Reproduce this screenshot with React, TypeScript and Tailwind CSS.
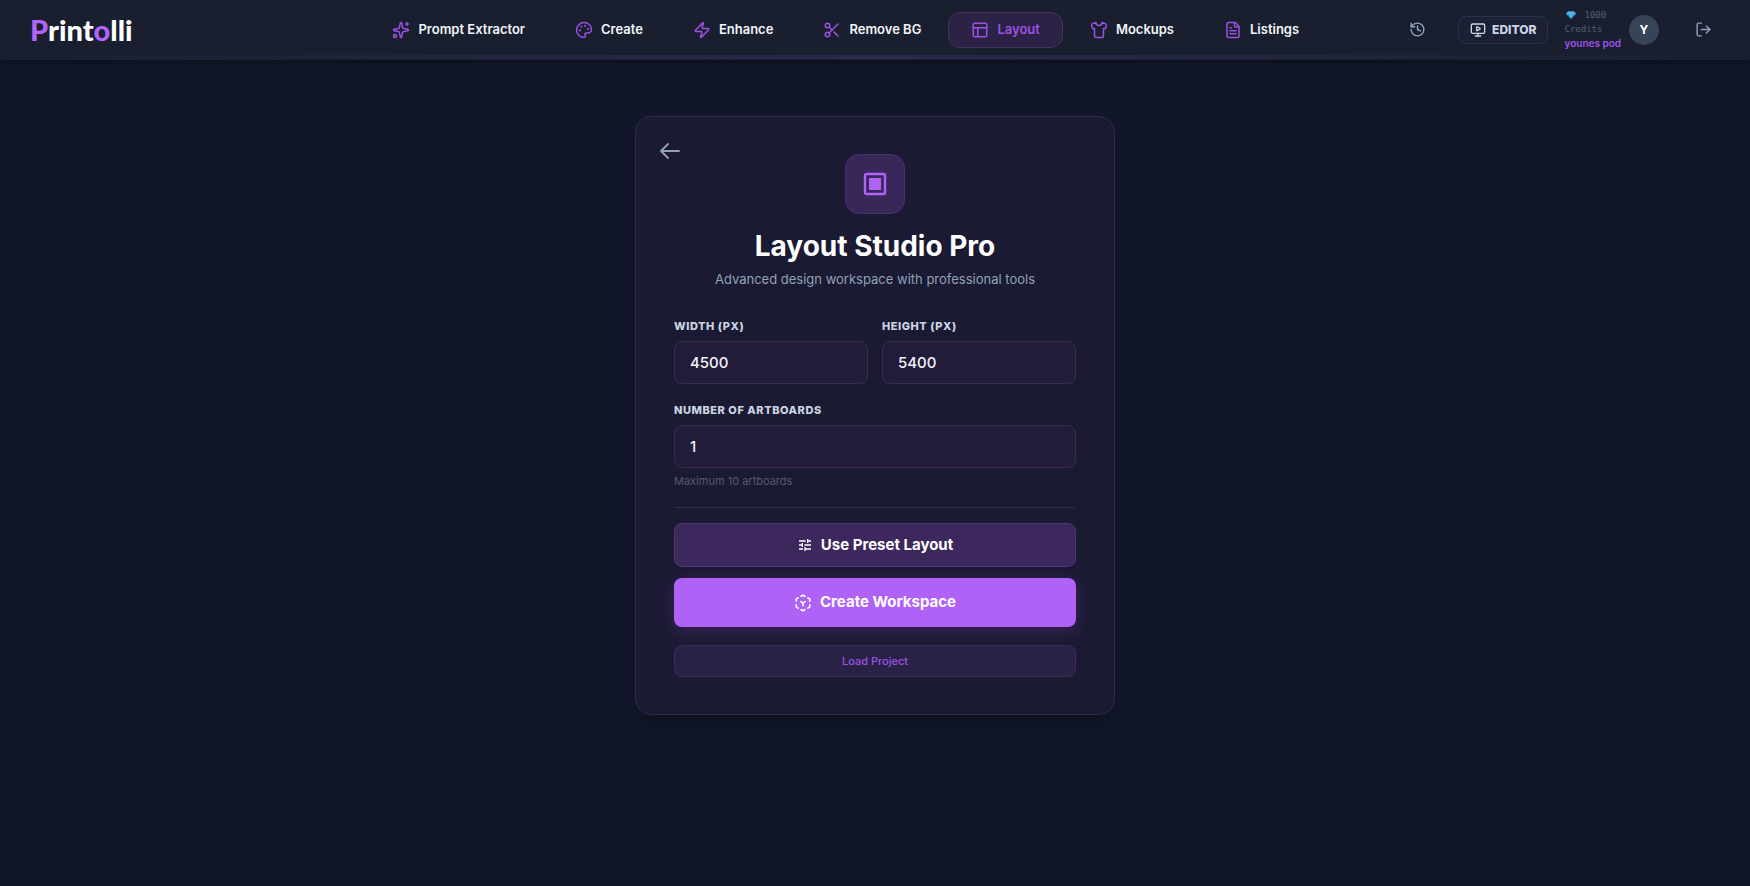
import React, { useState } from 'react';
import {
  FileText,
  History,
  LogOut,
  MonitorPlay,
  Palette,
  PanelsTopLeft,
  Scissors,
  Shirt,
  Sparkles,
  Zap,
} from 'lucide-react';
import { MdTune } from 'react-icons/md';

const navItems = [
  { id: 'prompt', label: 'Prompt Extractor', icon: Sparkles },
  { id: 'create', label: 'Create', icon: Palette },
  { id: 'enhance', label: 'Enhance', icon: Zap },
  { id: 'remove-bg', label: 'Remove BG', icon: Scissors },
  { id: 'layout', label: 'Layout', icon: PanelsTopLeft },
  { id: 'mockups', label: 'Mockups', icon: Shirt },
  { id: 'listings', label: 'Listings', icon: FileText },
];

const GemIcon: React.FC = () => (
  <svg viewBox="0 0 20 16" className="w-[10px] h-2" aria-hidden="true">
    <path d="M4 1h12l4 5-10 10L0 6z" fill="#2f8fd0" />
    <path d="M4 1h12l4 5H0z" fill="#57b4e4" />
    <path d="M6 6h8l-4 10z" fill="#4db6ee" />
  </svg>
);

// Hexagon of broken strokes with a three-way joint in the middle
const CubeIcon: React.FC = () => (
  <svg
    viewBox="0 0 24 24"
    className="w-[18px] h-[18px]"
    fill="none"
    stroke="currentColor"
    strokeWidth="2.2"
    strokeLinecap="round"
    strokeLinejoin="round"
    aria-hidden="true"
  >
    <path d="M9.5 3L12 1.600l2.500 1.400M18.500 5.200L21 6.600v3M21 14.400v3l-2.500 1.400M14.500 21L12 22.400 9.500 21M5.500 18.800L3 17.400v-3M3 9.600v-3l2.500-1.400" />
    <path d="M9 10.200l3 1.800 3-1.800M12 12v3.400" />
  </svg>
);

const Header: React.FC = () => {
  const [active, setActive] = useState('layout');

  return (
    <header className="relative flex items-center h-[60px] px-[30px] bg-[#191f2f] border-b border-[#1d1f33] shadow-md shadow-black/20">
      <a href="#" className="font-['Lato',sans-serif] text-[29px] leading-8 font-black text-white">
        <span className="text-[#b263f8]">P</span>rint<span className="text-[#b263f8]">o</span>lli
      </a>

      <div className="grow-3" />

      <nav className="flex items-center gap-1">
        {navItems.map(({ id, label, icon: Icon }) => (
          <button
            key={id}
            onClick={() => setActive(id)}
            className={`flex items-center gap-2 h-9 px-[22px] rounded-xl border text-[13px] font-semibold whitespace-nowrap transition-colors ${
              active === id ? 'bg-[#2b2245] border-[#43315e] text-[#9c50e4]' : 'border-transparent text-slate-100'
            }`}
          >
            <Icon className="w-[18px] h-[18px] text-[#9c50e4]" strokeWidth={2} />
            {label}
          </button>
        ))}
      </nav>

      <div className="grow" />

      <div className="flex items-center">
        <button aria-label="History" className="p-2 mr-6 text-slate-400">
          <History className="w-[17px] h-[17px]" />
        </button>
        <button className="flex items-center gap-1.5 h-7 px-[11px] mr-4 rounded-lg border border-[#2f3049] bg-[#1b2034] text-xs font-extrabold text-slate-300">
          <MonitorPlay className="w-4 h-4" />
          EDITOR
        </button>
        <div className="flex flex-col pb-0.5 mr-2 leading-[14px]">
          <span className="flex items-center gap-2 pl-0.5 font-['DejaVu_Sans_Mono',monospace] text-[9px] text-[#556074]">
            <GemIcon />
            1000
          </span>
          <span className="font-['DejaVu_Sans_Mono',monospace] text-[9px] text-[#556074]">Credits</span>
          <span className="text-[10px] font-semibold text-[#a052ea]">younes pod</span>
        </div>
        <div className="flex items-center justify-center w-[30px] h-[30px] rounded-full bg-[#374357] text-xs font-bold text-white">
          Y
        </div>
        <button aria-label="Log out" className="p-2 ml-7 text-slate-400">
          <LogOut className="w-[17px] h-[17px]" />
        </button>
      </div>

      <div className="absolute inset-x-0 bottom-0 h-1 bg-linear-to-r from-transparent via-[#6d4fd0]/20 to-transparent" />
    </header>
  );
};

interface FieldProps {
  id: string;
  label: string;
  value: string;
  onChange: (value: string) => void;
}

const Field: React.FC<FieldProps> = ({ id, label, value, onChange }) => (
  <div className="flex flex-col gap-2">
    <label
      htmlFor={id}
      className="text-[11px] leading-[14px] font-extrabold uppercase tracking-wider text-slate-300"
    >
      {label}
    </label>
    <input
      id={id}
      type="text"
      inputMode="numeric"
      value={value}
      onChange={(e) => onChange(e.target.value)}
      className="w-full h-[43px] px-[15px] rounded-lg border border-[#372d50] bg-[#231b3a] text-[15px] font-medium text-slate-100 outline-none focus:border-[#a855f7]"
    />
  </div>
);

const WorkspaceSetup: React.FC = () => {
  const [width, setWidth] = useState('4500');
  const [height, setHeight] = useState('5400');
  const [artboards, setArtboards] = useState('1');

  return (
    <section className="relative w-full max-w-[480px] px-[38px] py-[37px] rounded-2xl border border-[#2f2b4c] bg-[#1b1a33] shadow-xl shadow-black/10">
      <button aria-label="Back" className="absolute top-[22px] left-[22px] text-slate-400">
        <svg
          viewBox="0 0 24 24"
          className="w-6 h-6"
          fill="none"
          stroke="currentColor"
          strokeWidth="1.8"
          strokeLinecap="round"
          strokeLinejoin="round"
          aria-hidden="true"
        >
          <path d="M21 12H3M10 5l-7 7 7 7" />
        </svg>
      </button>

      <div className="flex flex-col items-center text-center">
        <div className="flex items-center justify-center w-[60px] h-[60px] rounded-[14px] border border-[#47306c] bg-[#3a2759] text-[#b061f6]">
          <svg viewBox="0 0 24 24" className="w-6 h-6" fill="none" aria-hidden="true">
            <rect x="2" y="2" width="20" height="20" rx="1.5" stroke="currentColor" strokeWidth="2.4" />
            <rect x="6" y="6" width="12" height="12" fill="currentColor" />
          </svg>
        </div>
        <h1 className="mt-3.5 text-[28px] leading-9 font-bold text-white">Layout Studio Pro</h1>
        <p className="mt-[5px] text-[13px] leading-5 text-slate-400">Advanced design workspace with professional tools</p>
      </div>

      <div className="grid grid-cols-2 gap-3.5 mt-[30px]">
        <Field id="width" label="Width (px)" value={width} onChange={setWidth} />
        <Field id="height" label="Height (px)" value={height} onChange={setHeight} />
      </div>
      <div className="mt-[19px]">
        <Field id="artboards" label="Number of Artboards" value={artboards} onChange={setArtboards} />
      </div>
      <p className="mt-[5px] text-[11px] leading-4 text-[#505a72]">Maximum 10 artboards</p>

      <hr className="mt-[18px] mb-[15px] border-[#2f2b4c]" />

      <button className="flex items-center justify-center gap-2 w-full h-11 rounded-lg border border-[#52347c] bg-[#3c285c] text-[15px] font-bold text-white">
        <MdTune className="w-4 h-4" />
        Use Preset Layout
      </button>
      <button className="flex items-center justify-center gap-2 w-full h-[49px] mt-[11px] rounded-lg bg-[#b061f6] text-[15px] font-bold text-white shadow-[0_4px_16px_rgba(168,85,247,0.2)]">
        <CubeIcon />
        Create Workspace
      </button>
      <button className="w-full h-8 mt-[18px] rounded-lg border border-[#3d2c5a] bg-[#2a2244] text-[11px] font-medium text-[#9c50e4]">
        Load Project
      </button>
    </section>
  );
};

const App: React.FC = () => (
  <div className="min-h-screen flex flex-col bg-[#111728] font-['Inter',sans-serif]">
    <Header />
    <main className="flex-1 flex justify-center items-start px-4 pt-14 pb-8">
      <WorkspaceSetup />
    </main>
  </div>
);

export default App;
